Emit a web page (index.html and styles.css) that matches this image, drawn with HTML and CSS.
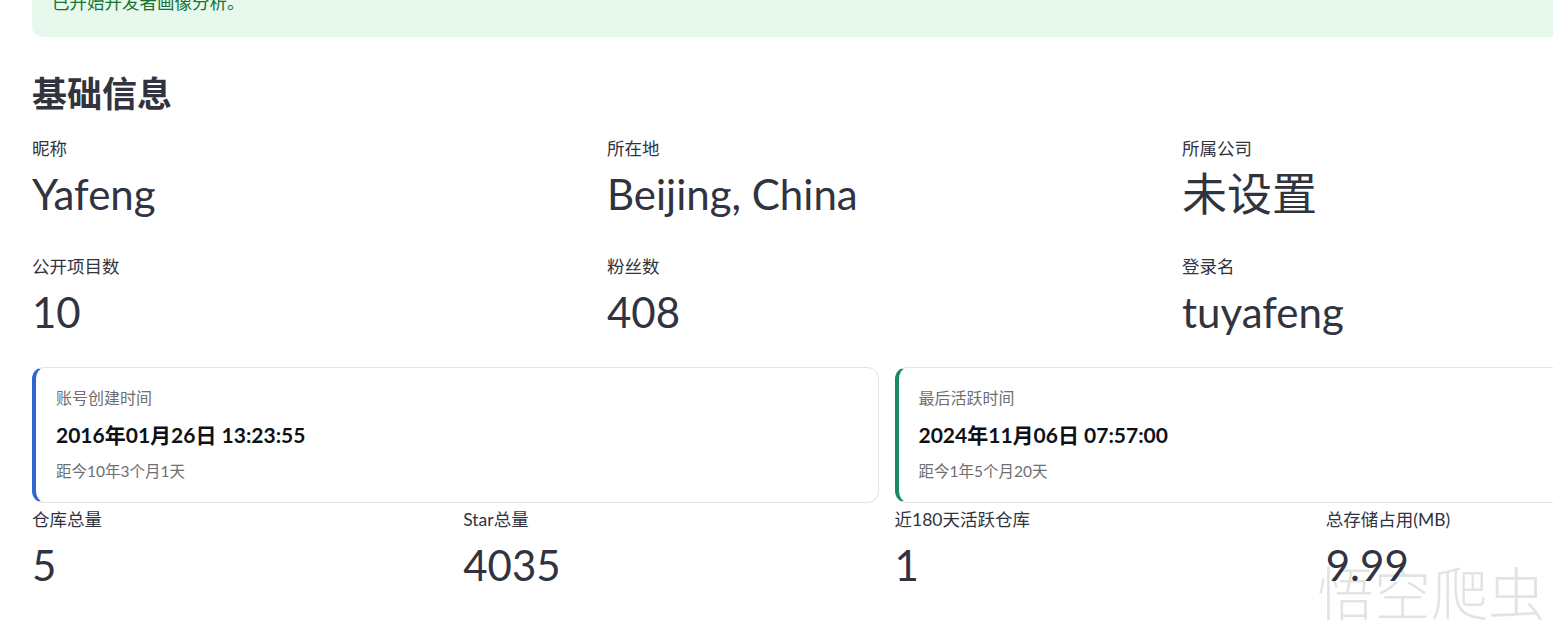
FILE: index.html
```html
<!DOCTYPE html>
<html lang="zh-CN">

<head>
    <meta charset="UTF-8">
    <meta name="viewport" content="width=device-width, initial-scale=1.0">
    <title>开发者画像</title>
    <link rel="stylesheet" href="styles.css">
</head>

<body>
    <div class="main">
        <div class="alert">已开始开发者画像分析。</div>

        <h3 class="title">基础信息</h3>

        <div class="cols cols-3">
            <div class="metric">
                <div class="metric-label">昵称</div>
                <div class="metric-value">Yafeng</div>
            </div>
            <div class="metric">
                <div class="metric-label">所在地</div>
                <div class="metric-value">Beijing, China</div>
            </div>
            <div class="metric">
                <div class="metric-label">所属公司</div>
                <div class="metric-value cjk">未设置</div>
            </div>
        </div>

        <div class="cols cols-3">
            <div class="metric">
                <div class="metric-label">公开项目数</div>
                <div class="metric-value">10</div>
            </div>
            <div class="metric">
                <div class="metric-label">粉丝数</div>
                <div class="metric-value">408</div>
            </div>
            <div class="metric">
                <div class="metric-label">登录名</div>
                <div class="metric-value">tuyafeng</div>
            </div>
        </div>

        <div class="cols cols-2 cards">
            <div class="card blue">
                <div class="card-label">账号创建时间</div>
                <div class="card-date">2016年01月26日 13:23:55</div>
                <div class="card-sub">距今10年3个月1天</div>
            </div>
            <div class="card green">
                <div class="card-label">最后活跃时间</div>
                <div class="card-date">2024年11月06日 07:57:00</div>
                <div class="card-sub">距今1年5个月20天</div>
            </div>
        </div>

        <div class="cols cols-4 repo-row">
            <div class="metric">
                <div class="metric-label">仓库总量</div>
                <div class="metric-value">5</div>
            </div>
            <div class="metric">
                <div class="metric-label">Star总量</div>
                <div class="metric-value">4035</div>
            </div>
            <div class="metric">
                <div class="metric-label">近180天活跃仓库</div>
                <div class="metric-value">1</div>
            </div>
            <div class="metric">
                <div class="metric-label">总存储占用(MB)</div>
                <div class="metric-value">9.99</div>
            </div>
        </div>
    </div>

    <div class="watermark">悟空爬虫</div>
</body>

</html>
```

FILE: styles.css
```css
html,
body {
    margin: 0;
    padding: 0;
    background-color: #fff;
    overflow: hidden;
}

body {
    font-family: Lato, "Noto Sans CJK SC", sans-serif;
    color: #31333f;
    height: 622px;
}

.main {
    width: 1709px;
    padding-left: 32px;
    display: flex;
    flex-direction: column;
    gap: 20px;
    margin-top: -11px;
}

.alert {
    background-color: #e7f8ed;
    color: #177233;
    border-radius: 10px;
    padding: 0 20px 20px 20px;
    font-size: 17.5px;
    line-height: 28px;
    height: 28px;
    margin-bottom: 15px;
}

.title {
    margin: 0;
    font-size: 35px;
    line-height: 42px;
    font-weight: 700;
}

.cols {
    display: grid;
    gap: 16px;
}

.cols-3 {
    grid-template-columns: repeat(3, 1fr);
}

.cols-2 {
    grid-template-columns: repeat(2, 1fr);
}

.cols-4 {
    grid-template-columns: repeat(4, 1fr);
}

.metric-label {
    font-size: 17.5px;
    line-height: 30px;
    height: 30px;
}

.metric-value {
    font-size: 42px;
    line-height: 54px;
    margin-top: 3px;
    padding-bottom: 11px;
    white-space: nowrap;
}

.metric-value.cjk {
    font-size: 45px;
}

.cards {
    margin-top: -3px;
}

.card {
    border: 1px solid #e4e4e6;
    border-left: 4px solid #2f66cc;
    border-radius: 12px;
    padding: 16px 20px 19px 20px;
    background-color: #fff;
}

.card.green {
    border-left-color: #1b8a63;
}

.card-label {
    font-size: 16px;
    line-height: 28px;
    color: #6e6e73;
}

.card-date {
    margin-top: 8px;
    font-size: 21px;
    line-height: 30px;
    font-weight: 700;
    color: #0e1117;
}

.card-sub {
    margin-top: 9px;
    font-size: 15.5px;
    line-height: 24px;
    color: #6e6e73;
}

.repo-row {
    margin-top: -18px;
}

.watermark {
    position: absolute;
    right: 8px;
    bottom: 0;
    font-family: "Noto Sans CJK SC", sans-serif;
    font-size: 57px;
    line-height: 64px;
    font-weight: 300;
    color: rgba(0, 0, 0, 0.11);
}
```
